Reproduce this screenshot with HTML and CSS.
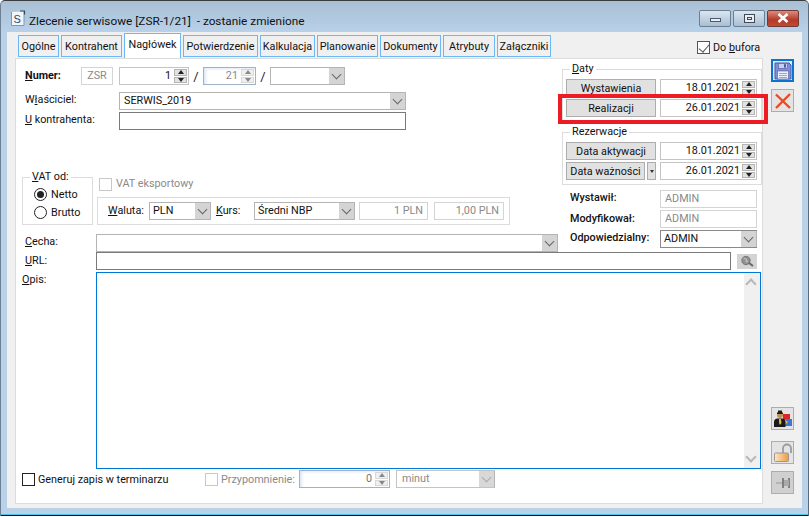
FILE: index.html
```html
<!DOCTYPE html>
<html lang="pl">
<head>
<meta charset="utf-8">
<title>Zlecenie serwisowe</title>
<link rel="stylesheet" href="styles.css">
</head>
<body>
<div class="window">
  <header class="titlebar">
    <svg class="appicon" width="16" height="18" viewBox="0 0 16 18"><path d="M2 3.500h9v12h3" fill="none" stroke="#9ab0c4"/><path d="M1.500 3v13.500h12.500V2.500" fill="#f2f6fa" stroke="#7f98ae"/><path d="M10 2h4.500v3.500" fill="none" stroke="#2f4a60" stroke-width="1.200"/><text x="3.500" y="14" font-size="11" font-family="Liberation Sans" fill="#2b4a63">S</text></svg>
    <div class="title">Zlecenie serwisowe [ZSR-1/21]&nbsp; - zostanie zmienione</div>
    <div class="winctrls">
      <div class="wbtn"><span class="wmin"></span></div>
      <div class="wbtn"><span class="wmax"></span></div>
      <div class="wbtn wclose"><svg width="12" height="10" viewBox="0 0 12 10"><path d="M1.500 1l9 8M10.500 1l-9 8" stroke="#fff" stroke-width="2.600"/></svg></div>
    </div>
  </header>
  <div class="client">
    <nav class="tabs">
      <div class="tab w41">Ogólne</div>
      <div class="tab w61">Kontrahent</div>
      <div class="tab active">Nagłówek</div>
      <div class="tab w75">Potwierdzenie</div>
      <div class="tab w55">Kalkulacja</div>
      <div class="tab w61">Planowanie</div>
      <div class="tab w61">Dokumenty</div>
      <div class="tab w52">Atrybuty</div>
      <div class="tab w54">Załączniki</div>
      <label class="bufor"><span class="check checked"></span><span>Do <u>b</u>ufora</span></label>
    </nav>
    <div class="main">
      <section class="panel">
        <div class="upper">
          <div class="left">
            <div class="row r-numer">
              <span class="lbl l-numer"><b><u>N</u>umer:</b></span>
              <div class="box dim w32 center">ZSR</div>
              <div class="spin w70 gapl6"><span class="val">1</span><span class="spinbtn"><i class="up"></i><i class="down"></i></span></div>
              <span class="slash">/</span>
              <div class="spin w53 soft"><span class="val grey">21</span><span class="spinbtn off"><i class="up"></i><i class="down"></i></span></div>
              <span class="slash">/</span>
              <div class="combo w75"><span class="val"></span><span class="arrow"></span></div>
            </div>
            <div class="row r-owner">
              <span class="lbl l-94">W<u>ł</u>aściciel:</span>
              <div class="combo w287"><span class="val">SERWIS_2019</span><span class="arrow"></span></div>
            </div>
            <div class="row r-kontr">
              <span class="lbl l-94"><u>U</u> kontrahenta:</span>
              <div class="box dark w287"></div>
            </div>
            <div class="vatwrap">
              <div class="group vat">
                <span class="legend"><u>V</u>AT od:</span>
                <label class="opt o1"><span class="radio on"></span>Netto</label>
                <label class="opt o2"><span class="radio"></span>Brutto</label>
              </div>
              <div class="vatright">
                <label class="export"><span class="check off"></span><span class="grey exporttext">VAT eksportowy</span></label>
                <div class="currency">
                  <span class="lbl l-41"><u>W</u>aluta:</span>
                  <div class="combo w62"><span class="val">PLN</span><span class="arrow"></span></div>
                  <span class="lbl l-kurs"><u>K</u>urs:</span>
                  <div class="combo w101"><span class="val">Średni NBP</span><span class="arrow"></span></div>
                  <div class="box dim right w69">1 PLN</div>
                  <div class="box dim right w70">1,00 PLN</div>
                </div>
              </div>
            </div>
            <div class="row r-cecha">
              <span class="lbl l-71"><u>C</u>echa:</span>
              <div class="combo w462"><span class="val"></span><span class="arrow"></span></div>
            </div>
          </div>
          <div class="right">
            <div class="group daty">
              <span class="legend"><u>D</u>aty</span>
              <div class="daterow first"><div class="btn w90">Wystawienia</div><div class="spin date"><span class="val">18.01.2021</span><span class="spinbtn"><i class="up"></i><i class="down"></i></span></div></div>
              <div class="daterow"><div class="btn w90">Realizacji</div><div class="spin date"><span class="val">26.01.2021</span><span class="spinbtn"><i class="up"></i><i class="down"></i></span></div></div>
            </div>
            <div class="group rez">
              <span class="legend">Rezerwacje</span>
              <div class="daterow first"><div class="btn w90">Data aktywacji</div><div class="spin date"><span class="val">18.01.2021</span><span class="spinbtn"><i class="up"></i><i class="down"></i></span></div></div>
              <div class="daterow"><div class="btn w79">Data ważności</div><div class="btn mini"></div><div class="spin date"><span class="val">26.01.2021</span><span class="spinbtn"><i class="up"></i><i class="down"></i></span></div></div>
            </div>
            <div class="inforow r1"><span class="lbl l-90 semi">Wystawił:</span><div class="box dim w97">ADMIN</div></div>
            <div class="inforow r2"><span class="lbl l-90 semi">Modyfikował:</span><div class="box dim w97">ADMIN</div></div>
            <div class="inforow r3"><span class="lbl l-90 semi">Odpowiedzialny:</span><div class="combo w97 tall"><span class="val">ADMIN</span><span class="arrow"></span></div></div>
          </div>
          <div class="redmark"></div>
        </div>
        <div class="row r-url">
          <span class="lbl l-71"><u>U</u>RL:</span>
          <div class="box dark w635"></div>
          <div class="urlbtn"><svg width="16" height="12" viewBox="0 0 16 12"><circle cx="7" cy="5.500" r="4.200" fill="#8f9090" stroke="#777"/><path d="M4.500 3.500l3 .5-.5 3 2-1" fill="none" stroke="#c8c8c8"/><path d="M10 8l4 3" stroke="#666" stroke-width="2"/></svg></div>
        </div>
        <div class="row r-opis">
          <span class="lbl l-opis"><u>O</u>pis:</span>
          <div class="memo"><div class="memoscroll"><span class="chev-up"></span><span class="chev-down"></span></div></div>
        </div>
        <div class="row r-bottom">
          <label class="gen"><span class="check dark"></span>Generuj zapis w terminarzu</label>
          <label class="remind"><span class="check off"></span><span class="grey">Przypomnienie:</span></label>
          <div class="spin w91 soft"><span class="val grey2">0</span><span class="spinbtn off"><i class="up"></i><i class="down"></i></span></div>
          <div class="combo w99 disabled"><span class="val grey">minut</span><span class="arrow"></span></div>
        </div>
      </section>
      <aside class="side">
        <div class="tool save"><svg width="18" height="18" viewBox="0 0 18 18"><path d="M1 1h14l2 2v14H1z" fill="#7f8ed6" stroke="#4b5aa6"/><rect x="4.500" y="1.500" width="9" height="5" fill="#c8cfee" stroke="#4b5aa6" stroke-width=".6"/><rect x="10" y="2.200" width="2" height="3.400" fill="#4b5aa6"/><rect x="3.500" y="9" width="11" height="8" fill="#eef0fa" stroke="#4b5aa6" stroke-width=".6"/><path d="M5 11.500h8M5 13.500h8M5 15.500h8" stroke="#9aa3d8"/></svg></div>
        <div class="tool cancel"><svg width="18" height="18" viewBox="0 0 18 18"><path d="M2 2.500l14 13.500M16 2l-14 14" stroke="#ee4a22" stroke-width="2.400"/></svg></div>
        <div class="spacer"></div>
        <div class="tool person"><svg width="20" height="20" viewBox="0 0 20 20"><rect x="10" y="5" width="7" height="7" fill="#d9262a"/><rect x="12" y="10" width="7" height="7" fill="#3b78d6"/><path d="M12 11l3 2-3 3z" fill="#e9b93a"/><circle cx="7" cy="6" r="3" fill="#c78d4f"/><path d="M4 3.500h6v1.500H4z" fill="#1c1c1c"/><path d="M5 1.500h4v2.500H5z" fill="#1c1c1c"/><path d="M1 18v-5q0-3 3-3.500h6q2 .5 2.500 3.500v5z" fill="#1a1a1a"/><path d="M6 10l2 0 .5 4-1.500 2-1-2z" fill="#e2b33a"/></svg></div>
        <div class="tool lock"><svg width="20" height="20" viewBox="0 0 20 20"><path d="M10 10V5.500a4 4 0 0 1 8 0V10" fill="none" stroke="#9c9c9c" stroke-width="1.800"/><defs><linearGradient id="lk" x1="0" x2="1" y1="0" y2="0"><stop offset="0" stop-color="#fde7c8"/><stop offset="1" stop-color="#ef9a3d"/></linearGradient></defs><rect x="1.500" y="10" width="14" height="8.500" rx="1" fill="url(#lk)" stroke="#999"/></svg></div>
        <div class="tool pin"><svg width="20" height="14" viewBox="0 0 20 14"><path d="M3 7h7" stroke="#999"/><path d="M10 2v10M16 2v10" stroke="#808080" stroke-width="2"/><path d="M11 4h5v6h-5z" fill="#a9a9a9"/></svg></div>
      </aside>
    </div>
  </div>
  <div class="bottomedge"></div>
</div>
</body>
</html>
```
FILE: styles.css
```css
* { box-sizing: border-box; }
html, body { margin: 0; padding: 0; }
body { width: 809px; height: 517px; overflow: hidden; background: #fff; font-family: Roboto, "Noto Sans", sans-serif; font-size: 10.8px; color: #111; }
u { text-decoration: underline; }
.window { width: 809px; height: 516px; border-top: 1px solid #3a3d40; border-left: 1px solid #6d8093; border-right: 1px solid #5a6a7a; border-radius: 5px 5px 0 0; background: linear-gradient(#a9bfd4 0, #b9d2ea 32px, #b9d2ea 100%); position: relative; }
.titlebar { height: 31px; display: flex; align-items: center; padding-left: 9px; }
.appicon { margin-top: 3px; }
.title { margin-left: 3px; margin-top: 9px; font-size: 11.8px; color: #111; white-space: nowrap; flex: 1; }
.winctrls { display: flex; gap: 2px; margin-right: 9px; margin-top: 3px; }
.wbtn { width: 32px; height: 17px; border: 1px solid #6c7f92; border-radius: 2px; background: linear-gradient(#dbe6f0, #a9bed2); display: flex; align-items: center; justify-content: center; }
.wclose { background: linear-gradient(#dc8b7c, #b43a28 60%, #c04a36); border-color: #6e3a33; }
.wmin { width: 11px; height: 4px; margin-top: 3px; background: #e8eef4; border: 1px solid #4b5b6b; }
.wmax { width: 11px; height: 9px; background: #e8eef4; border: 1px solid #3d4b59; box-shadow: inset 0 0 0 2px #e8eef4, inset 0 0 0 3px #3d4b59; }
.client { margin-left: 6px; width: 795px; height: 476px; background: #f0f0f0; }
.tabs { height: 26px; display: flex; align-items: flex-end; padding-left: 11px; position: relative; }
.tab { height: 22px; margin-right: 2px; margin-bottom: 1px; background: #f0f0f0; border: 1px solid #6bb8f5; display: flex; align-items: center; justify-content: center; white-space: nowrap; color: #111; }
.tab.active { width: 57px; height: 25px; margin-bottom: 0; background: #fff; border-color: #6bb8f5; border-bottom: none; padding-bottom: 4px; position: relative; z-index: 2; }
.w41 { width: 41px; } .w61 { width: 61px; } .w75 { width: 75px; } .w55 { width: 55px; } .w52 { width: 52px; } .w54 { width: 54px; }
.bufor { position: absolute; left: 690px; top: 9px; display: flex; align-items: center; gap: 3px; }
.check { display: inline-block; width: 13px; height: 13px; border: 1px solid #555; background: #fff; flex: none; position: relative; }
.check.checked::after { content: ""; position: absolute; left: 3px; top: 0; width: 5px; height: 9px; border: solid #555; border-width: 0 1.500px 1.500px 0; transform: rotate(40deg); }
.check.off { border-color: #c8c8c8; }
.check.dark { border-color: #222; }
.main { display: flex; height: 450px; }
.panel { margin-left: 8px; width: 750px; height: 446px; background: #fff; border: 1px solid #dcdcdc; }
.upper { display: flex; height: 193px; position: relative; }
.left { width: 546px; flex: none; }
.right { width: 200px; flex: none; }
.row { display: flex; align-items: center; padding-left: 9px; }
.r-numer { margin-top: 8px; height: 18px; }
.r-owner { margin-top: 7px; height: 18px; }
.r-kontr { margin-top: 2px; height: 18px; }
.r-cecha { margin-top: 9px; height: 18px; }
.r-url { height: 18px; }
.r-opis { margin-top: 2px; height: 197px; align-items: flex-start; padding-left: 6px; }
.r-bottom { margin-top: 1px; height: 18px; padding-left: 6px; }
.lbl { flex: none; white-space: nowrap; position: relative; top: -1px; }
.r-owner .lbl, .r-kontr .lbl, .r-cecha .lbl, .r1 .lbl, .r3 .lbl { top: -2px; }
.r-opis .lbl { top: 1px; }
.l-numer { width: 56px; }
.l-94 { width: 94px; }
.l-71 { width: 71px; }
.l-41 { width: 41px; }
.l-kurs { width: 38px; margin-left: 5px; }
.l-90 { width: 90px; padding-left: 4px; }
.l-opis { width: 74px; }
.semi { font-weight: 500; }
.box { height: 18px; border: 1px solid #c4c4c4; background: #fff; flex: none; padding: 0 4px; line-height: 16px; }
.box.dim { color: #8a8a8a; border-color: #d4d4d4; }
.box.dark { border-color: #7a7a7a; }
.center { text-align: center; }
.box.right { text-align: right; width: auto; }
.w32 { width: 32px; } .w70 { width: 70px; } .w53 { width: 53px; } .w75 { width: 75px; } .w287 { width: 287px; } .w62 { width: 62px; } .w101 { width: 101px; } .w462 { width: 462px; } .w97 { width: 97px; } .w635 { width: 635px; } .w91 { width: 91px; } .w99 { width: 99px; } .w90 { width: 90px; } .w79 { width: 79px; }
.box.w69 { width: 69px; margin-left: 4px; }
.box.w70 { width: 70px; margin-left: 6px; }
.gapl6 { margin-left: 6px; }
.slash { width: 14px; text-align: center; font-size: 13px; color: #223; }
.grey { color: #8a8a8a; }
.grey2 { color: #777; }
.exporttext { position: relative; top: -1px; }
.spin { height: 18px; border: 1px solid #c4c4c4; background: #fff; display: flex; flex: none; align-items: stretch; }
.spin .val { flex: 1; text-align: right; padding-right: 3px; line-height: 16px; }
.date .val { padding-right: 2px; }
.spin.soft { border-color: #9fb2c8; box-shadow: inset 3px 2px 3px -1px #dce9f7; }
.spinbtn { width: 13px; margin: 1px 1px 1px 0; display: flex; flex-direction: column; gap: 1px; flex: none; }
.spinbtn i { flex: 1; background: #e2e2e2; border: 1px solid #b5b5b5; position: relative; display: block; }
.spinbtn i::after { content: ""; position: absolute; left: 50%; top: 50%; transform: translate(-50%, -50%); border-left: 3px solid transparent; border-right: 3px solid transparent; }
.spinbtn .up::after { border-bottom: 4px solid #222; }
.spinbtn .down::after { border-top: 4px solid #222; }
.spinbtn.off i { background: #efefef; border-color: #d8d8d8; }
.spinbtn.off .up::after { border-bottom-color: #888; }
.spinbtn.off .down::after { border-top-color: #888; }
.combo { height: 18px; border: 1px solid #b4b4b4; background: #fff; display: flex; flex: none; align-items: stretch; }
.combo .val { flex: 1; padding-left: 3px; line-height: 16px; white-space: nowrap; overflow: hidden; }
.w287 .val { padding-left: 4px; }
.disabled .val { padding-left: 5px; }
.combo.tall { height: 18px; border-color: #8a8a8a; }
.arrow { width: 15px; flex: none; background: #d4d4d4; position: relative; box-shadow: 1px 0 0 #b4b4b4; }
.arrow::after { content: ""; position: absolute; left: 4px; top: 3px; width: 6px; height: 6px; border: solid #666; border-width: 0 1px 1px 0; transform: rotate(45deg); }
.combo.disabled { border-color: #c4c4c4; }
.combo.disabled .arrow { background: #d8d8d8; }
.combo.disabled .arrow::after { border-color: #aaa; }
.vatwrap { display: flex; margin-top: 47px; padding-left: 6px; height: 48px; }
.group { border: 1px solid #dcdcdc; position: relative; }
.legend { position: absolute; left: 7px; top: -8px; background: #fff; padding: 0 2px; line-height: 14px; }
.vat { width: 71px; height: 48px; padding: 7px 0 0 11px; flex: none; }
.opt { display: flex; align-items: center; gap: 4px; height: 18px; }
.radio { width: 13px; height: 13px; border: 1px solid #222; border-radius: 50%; background: #fff; flex: none; position: relative; }
.radio.on::after { content: ""; position: absolute; left: 2px; top: 2px; width: 7px; height: 7px; border-radius: 50%; background: #222; }
.vatright { margin-left: 4px; }
.export { display: flex; align-items: center; gap: 4px; margin-left: 2px; height: 13px; margin-top: 1px; }
.currency { margin-top: 6px; width: 413px; height: 28px; border: 1px solid #dcdcdc; display: flex; align-items: center; padding-left: 10px; }
.daty { margin-top: 10px; width: 200px; height: 52px; padding: 9px 0 0 3px; }
.rez { margin-top: 11px; width: 200px; height: 53px; padding: 9px 0 0 3px; }
.daterow { display: flex; height: 18px; margin-top: 2px; }
.daterow.first { margin-top: 0; }
.btn { height: 18px; background: #e1e1e1; border: 1px solid #adadad; display: flex; align-items: center; justify-content: center; flex: none; white-space: nowrap; }
.btn.mini { width: 9px; margin-left: 2px; position: relative; }
.btn.mini::after { content: ""; border-left: 2.500px solid transparent; border-right: 2.500px solid transparent; border-top: 3px solid #333; }
.date { width: 97px; margin-left: 4px; }
.inforow { display: flex; align-items: center; height: 18px; margin-top: 2px; padding-left: 4px; }
.inforow .l-90 { width: 94px; }
.inforow.r1 { margin-top: 5px; }
.redmark { position: absolute; left: 542px; top: 35px; width: 210px; height: 30px; border: 4px solid #ed1c24; pointer-events: none; }
.urlbtn { width: 20px; height: 15px; margin-left: 6px; background: #d4d4d4; display: flex; align-items: center; justify-content: center; flex: none; }
.memo { width: 665px; height: 197px; border: 1px solid #0078d7; background: #fff; display: flex; justify-content: flex-end; }
.memoscroll { width: 16px; background: #f0f0f0; position: relative; }
.chev-up, .chev-down { position: absolute; left: 3px; width: 8px; height: 8px; border: solid #b8b8b8; border-width: 2px 0 0 2px; transform: rotate(45deg); }
.chev-up { top: 7px; }
.chev-down { bottom: 7px; transform: rotate(225deg); }
.gen { display: flex; align-items: center; gap: 3px; width: 183px; }
.remind { display: flex; align-items: center; gap: 3px; width: 94px; }
.r-bottom .w99 { margin-left: 6px; }
.side { width: 31px; margin-left: 8px; display: flex; flex-direction: column; height: 445px; }
.tool { width: 23px; height: 23px; display: flex; align-items: center; justify-content: center; border: 1px solid #adadad; background: #e4e4e4; flex: none; }
.save { border: 2px solid #0a74d0; background: #dfe6f4; margin-top: 1px; }
.cancel { margin-top: 7px; }
.spacer { flex: 1; }
.person { margin-bottom: 11px; }
.lock { margin-bottom: 7px; }
.pin { margin-bottom: 9px; background: #d0d0d0; }
.bottomedge { position: absolute; left: 0; right: 0; bottom: 0; height: 2px; background: #111; border-top: 1px solid #4cc4e8; }
```
